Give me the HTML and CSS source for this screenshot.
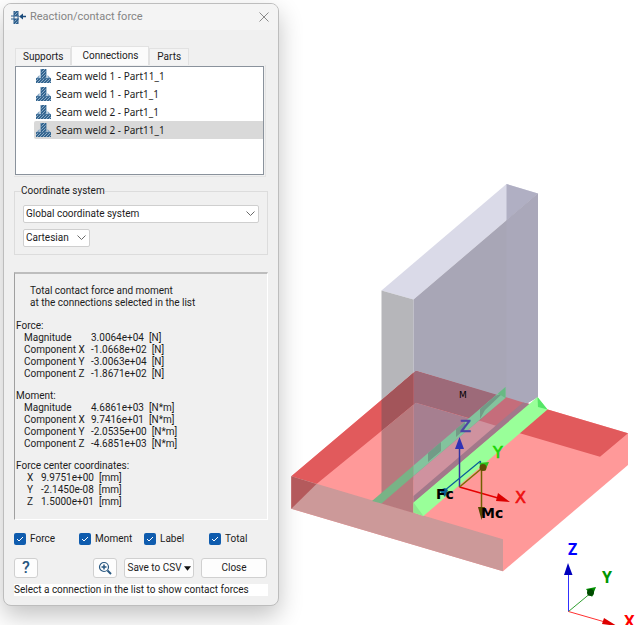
FILE: index.html
```html
<!DOCTYPE html>
<html lang="en">
<head>
<meta charset="utf-8">
<title>Reaction/contact force</title>
<link rel="stylesheet" href="styles.css">
</head>
<body>
<svg class="defs" aria-hidden="true">
  <defs>
    <pattern id="hatch" width="3" height="3" patternUnits="userSpaceOnUse">
      <rect width="3" height="3" fill="#34658f"/>
      <path d="M-1 1 1 -1M0 3 3 0M2 4 4 2" stroke="#b4cbe0" stroke-width=".7"/>
    </pattern>
    <symbol id="weld" viewBox="0 0 15 14">
      <path d="M5 0h5v9H5z" fill="url(#hatch)"/>
      <path d="M0 9.500h15V14H0z" fill="url(#hatch)"/>
      <path d="M3.500 6V9H.5zM11.500 6V9h3z" fill="#7fa2c2"/>
      <path d="M5 0v9M10 0v9M0 9.500h15" stroke="#2f628f" stroke-width=".8"/>
    </symbol>
  </defs>
</svg>
<div class="app">
  <section class="dialog" aria-label="Reaction/contact force">
    <header class="titlebar">
      <svg class="logo" viewBox="0 0 15 15"><path d="M3 1h4v5H3zM3 9h4v5H3z" fill="url(#hatch)"/><path d="M0 6h8M0 9h8M3 1v13M7 1v13" stroke="#2b5c8c"/><path d="M10 6.500h5" stroke="#1c4c7c" stroke-width="1.500"/><path d="M8 6.500l4-3v6z" fill="#1c4c7c"/></svg>
      <h1>Reaction/contact force</h1>
      <button class="x" aria-label="Close window"><svg viewBox="0 0 10 10"><path d="M.5.5l9 9M9.500.5l-9 9" stroke="#8a8a8a"/></svg></button>
    </header>
    <div class="tabs" role="tablist">
      <button role="tab">Supports</button><button role="tab" class="on" aria-selected="true">Connections</button><button role="tab">Parts</button>
    </div>
    <div class="pane">
      <ul class="list">
        <li><svg><use href="#weld"/></svg>Seam weld 1 - Part11_1</li>
        <li><svg><use href="#weld"/></svg>Seam weld 1 - Part1_1</li>
        <li><svg><use href="#weld"/></svg>Seam weld 2 - Part1_1</li>
        <li class="selected"><svg><use href="#weld"/></svg>Seam weld 2 - Part11_1</li>
      </ul>
    </div>
    <fieldset class="coords">
      <legend>Coordinate system</legend>
      <span class="select wide"><select aria-label="Coordinate system"><option>Global coordinate system</option></select><svg viewBox="0 0 9 6"><path d="M.5.5l4 4 4-4"/></svg></span>
      <span class="select narrow"><select aria-label="Coordinate type"><option>Cartesian</option></select><svg viewBox="0 0 9 6"><path d="M.5.5l4 4 4-4"/></svg></span>
    </fieldset>
    <section class="readout">
      <p>Total contact force and moment<br>at the connections selected in the list</p>
      <h2>Force:</h2>
      <table>
        <tr><th>Magnitude</th><td>3.0064e+04 &nbsp;[N]</td></tr>
        <tr><th>Component X</th><td>-1.0668e+02 &nbsp;[N]</td></tr>
        <tr><th>Component Y</th><td>-3.0063e+04 &nbsp;[N]</td></tr>
        <tr><th>Component Z</th><td>-1.8671e+02 &nbsp;[N]</td></tr>
      </table>
      <h2>Moment:</h2>
      <table>
        <tr><th>Magnitude</th><td>4.6861e+03 &nbsp;[N*m]</td></tr>
        <tr><th>Component X</th><td>9.7416e+01 &nbsp;[N*m]</td></tr>
        <tr><th>Component Y</th><td>-2.0535e+00 &nbsp;[N*m]</td></tr>
        <tr><th>Component Z</th><td>-4.6851e+03 &nbsp;[N*m]</td></tr>
      </table>
      <h2>Force center coordinates:</h2>
      <table class="center">
        <tr><th>X</th><td>9.9751e+00 &nbsp;[mm]</td></tr>
        <tr><th>Y</th><td>-2.1450e-08 &nbsp;[mm]</td></tr>
        <tr><th>Z</th><td>1.5000e+01 &nbsp;[mm]</td></tr>
      </table>
    </section>
    <div class="checks">
      <label><input type="checkbox" checked>Force</label>
      <label><input type="checkbox" checked>Moment</label>
      <label><input type="checkbox" checked>Label</label>
      <label><input type="checkbox" checked>Total</label>
    </div>
    <div class="actions">
      <button class="help" aria-label="Help">?</button>
      <button class="zoom" aria-label="Zoom to force"><svg viewBox="0 0 14 14" fill="none" stroke="#285780"><circle cx="6" cy="6" r="4.500" stroke-width="1.200"/><path d="M3.500 6h5M6 3.500v5" stroke-width="1.500"/><path d="M9.500 9.500l3.500 3.500" stroke-width="2"/></svg></button>
      <button class="csv">Save to CSV<svg viewBox="0 0 8 5"><path d="M0 0h8L4 5z" fill="#111"/></svg></button>
      <button class="close">Close</button>
    </div>
    <p class="status">Select a connection in the list to show contact forces</p>
  </section>
  <svg class="scene" viewBox="280 0 359 625" preserveAspectRatio="xMinYMin meet" role="img" aria-label="Welded plates with contact force and moment">
    <!-- base plate -->
    <path d="M291.300 476.300 416 370.700 628 433.300V465L503 571.300 291.300 508.700z" fill="#ff9999"/>
    <path d="M291.300 476.300 416 370.700 628 433.300 600 456.700 416 402.700 316.500 484z" fill="#e15a5c"/>
    <path d="M291.300 476.300 503 539.300V571.300L291.300 508.700z" fill="#cc9999"/>
    <path d="M291.300 476.300 316.500 484 291.300 508.700z" fill="#b45a5c"/>
    <!-- upright plate -->
    <path d="M381.500 290.500 506.500 184 538 193.500 413.500 299.500z" fill="#dadae8"/>
    <path d="M506.500 184 538 193.500 506.500 220.500z" fill="#b0afc3"/>
    <path d="M381.500 290.500 413.500 299.500V372.500L381.500 400z" fill="#b6b6ba"/>
    <path d="M413.500 299.500 538 193.500V397L526 404 416 370.700 413.500 373z" fill="#a8a6b6"/>
    <path d="M506.500 220.500 538 193.500V397L526 404 506.500 398z" fill="#aaa8ba"/>
    <path d="M381.500 400 413.500 372.500V404.500L381.500 431z" fill="#a3555a"/>
    <path d="M381.500 431 413.500 404.500V513L381.500 503.500z" fill="#b77a7e"/>
    <path d="M413.500 373 416 370.700 506 397.500V428.500L416 402.700 413.500 404.500z" fill="#9d6a79"/>
    <path d="M413.500 404.500 416 402.700 482 422 413.500 480z" fill="#a67f90"/>
    <path d="M505.500 397 528 404 497 430 478 422z" fill="#c56d7b"/>
    <path d="M413.500 476 479 420.500 500 427 413.500 501.500z" fill="#cf929f"/>
    <path d="M413.500 496 523 402.500 530 404 413.500 503z" fill="#a2788a"/>
    <!-- far weld -->
    <path d="M372 501 413.500 465.500V476L381.500 503.500z" fill="#78b386"/>
    <path d="M413.500 465.500 505.500 387V398L413.500 476z" fill="#83c39d"/>
    <path d="M428 453l13-11v9l-13 11zM456 429l9-7v7l-9 8zM480 409l15-13 8-3-18 17-5 9z" fill="#729b87"/>
    <path d="M498 393.500 505.500 387V398z" fill="#68b984"/>
    <!-- near weld -->
    <path d="M413.500 502.500 537.500 397 547.500 409.500 423.500 516 413.500 512.500z" fill="#99ff99"/>
    <path d="M537.500 397 547.500 409.500 538 407z" fill="#55e566"/>
    <path d="M413.500 502.500 423.500 516 413.500 512.500z" fill="#8de88e"/>
    <!-- load axes -->
    <path d="M459.500 487V448" stroke="#34349f" stroke-width="1.500"/><path d="M455 449 459.500 437 464 449z" fill="#3131b5"/>
    <path d="M459.500 487 498 498" stroke="#e60000" stroke-width="1.500"/><path d="M498 493 510 502 496 501z" fill="#db0000"/>
    <path d="M459.500 487 481 469" stroke="#7d7000" stroke-width="1.500"/>
    <path d="M480.500 461 444 491M480.500 461v5" stroke="#085f99" stroke-width="1.200"/>
    <path d="M439 490l6-2 3 2-3 7z" fill="#086393"/>
    <path d="M481.500 470V510" stroke="#716000" stroke-width="1.500"/><path d="M478 507h7l-3.500 13z" fill="#594800"/>
    <path d="M479 463 489 462 485 471z" fill="#2bc51c"/><circle cx="483" cy="467.500" r="3.500" fill="#604b06"/>
    <text class="axis z" x="460" y="432">Z</text><text class="axis y" x="493" y="458">Y</text><text class="axis x-axis" x="515" y="503">X</text>
    <text class="tag" x="436" y="499">Fc</text><text class="tag" x="481" y="518">Mc</text><text class="mark" x="459" y="398">M</text>
    <!-- orientation triad -->
    <path d="M568.500 611.500V573" stroke="#3030ff"/><path d="M564 575 568 563 572.500 575z" fill="#0000bd"/>
    <path d="M568.500 611.500 592 592" stroke="#30a030"/><path d="M586 589 596 587 592 597z" fill="#009000"/><circle cx="590.500" cy="592.500" r="3.500" fill="#004b00"/>
    <path d="M568.500 611.500 605 622" stroke="#ff3030"/><path d="M604 618 617 626 602 624z" fill="#dd0000"/>
    <text class="triad" x="568" y="555" fill="#00f">Z</text><text class="triad" x="602" y="583" fill="#009600">Y</text><text class="triad" x="624" y="627" fill="#f00">X</text>
  </svg>
</div>
</body>
</html>
```
FILE: styles.css
```css
*{box-sizing:border-box}
body{margin:0;background:#fff;color:#1c1c1c;font:10px/12px Roboto,"Noto Sans",sans-serif}
h1,h2,p,ul,fieldset{margin:0;padding:0;font-weight:400}
button,select,input{font:inherit;color:inherit;margin:0}
svg{display:block}
.defs{position:absolute;width:0;height:0}
.app{display:flex;align-items:flex-start;overflow:hidden;min-height:100vh}
.dialog{flex:none;width:276px;margin:3px 1px 0 3px;padding:0 10px 9px;background:#f0f0f0;border:1px solid #bdbdbd;border-radius:8px;box-shadow:0 10px 24px rgba(0,0,0,.24)}
.scene{flex:1;min-width:0;height:auto}

.titlebar{display:flex;align-items:center;height:26px;margin:0 -10px 16px;padding:0 9px 0 7px;background:#f4f4f4;border-radius:7px 7px 0 0;color:#858585}
.titlebar h1{flex:1;font-size:11px;line-height:16px}
.logo{width:15px;height:15px;margin-right:4px}
.x{padding:0;border:0;background:none}
.x svg{width:10px;height:10px}

.tabs{display:flex;align-items:flex-end;padding-left:1px}
.tabs button{height:17px;padding:0 7px;border:1px solid #e2e2e2;border-bottom:0;background:#f3f3f3;line-height:14px}
.tabs .on{height:19px;padding:0 10px;background:#fbfbfb}
.pane{margin-right:2px;padding:1px;border:solid #e4e4e4;border-width:0 1px 1px 0}
.list{height:109px;border:1px solid #8a929c;background:#fff;list-style:none;font-family:"Noto Sans","Open Sans",sans-serif}
.list li{display:flex;align-items:center;gap:5px;height:18px;margin-left:18px;padding-left:2px;border-radius:2px 0 0 2px}
.list svg{width:15px;height:14px}
.list .selected{background:#d9d9d9}

.coords{margin-top:8px;padding:8px 8px 7px;border:1px solid #dcdcdc;display:flex;flex-direction:column;gap:6px;min-width:0}
.coords legend{margin-left:-2px;padding:0;line-height:12px}
.select{display:flex;align-items:center;position:relative;height:18px}
.select select{width:100%;height:100%;padding:0 2px;border:1px solid #cfcfcf;border-radius:2px;background:#fff;appearance:none}
.select svg{position:absolute;right:4px;width:9px;height:6px;fill:none;stroke:#6a6a6a;pointer-events:none}
.narrow{width:67px}

.readout{margin-top:17px;padding:11px 1px 10px;border:1px solid #fff;border-top:2px solid #bdbdbd;border-left-color:#a0a0a0}
.readout p{padding-left:14px;margin-bottom:11px}
.readout h2{font-size:10px;line-height:12px}
.readout table{margin:0 0 10px 8px;border-collapse:collapse}
.readout .center{margin:0 0 1px 11px}
.readout th,.readout td{padding:0;font-weight:400;text-align:left;white-space:nowrap}
.readout th{width:67px}
.readout .center th{width:14px}

.checks{display:grid;grid-template-columns:repeat(4,65px);margin-top:13px}
.checks label{display:flex;align-items:center;gap:4px}
.checks input{appearance:none;width:12px;height:12px;border-radius:2px;background:#0f5cae url("data:image/svg+xml,%3Csvg xmlns='http://www.w3.org/2000/svg' viewBox='0 0 12 12'%3E%3Cpath d='M3 6l2 2 4-4' fill='none' stroke='white'/%3E%3C/svg%3E")}
.actions{display:flex;margin-top:13px;gap:7px}
.actions button{display:flex;align-items:center;justify-content:center;height:20px;padding:0;border:1px solid #d0d0d0;border-radius:3px;background:#fdfdfd}
.actions .help{width:24px;margin-right:auto;color:#285780;font-size:16px;font-weight:500}
.actions .zoom{width:24px}
.zoom svg{width:14px;height:14px}
.actions .csv{width:70px;gap:2px;white-space:nowrap}
.csv svg{width:7px;height:5px}
.actions .close{width:66px;margin-right:1px}
.status{margin-top:6px;background:#fff;white-space:nowrap}

.axis{font:16px "DejaVu Sans",sans-serif;stroke-width:.6}
.z{fill:#4d44a5;stroke:#4d44a5}
.y{fill:#19d400;stroke:#19d400}
.x-axis{fill:#ee1010;stroke:#ee1010}
.tag{font:bold 14px "DejaVu Sans",sans-serif}
.mark{font:9px "DejaVu Sans",sans-serif}
.triad{font:bold 16px "Noto Sans",sans-serif}
```
